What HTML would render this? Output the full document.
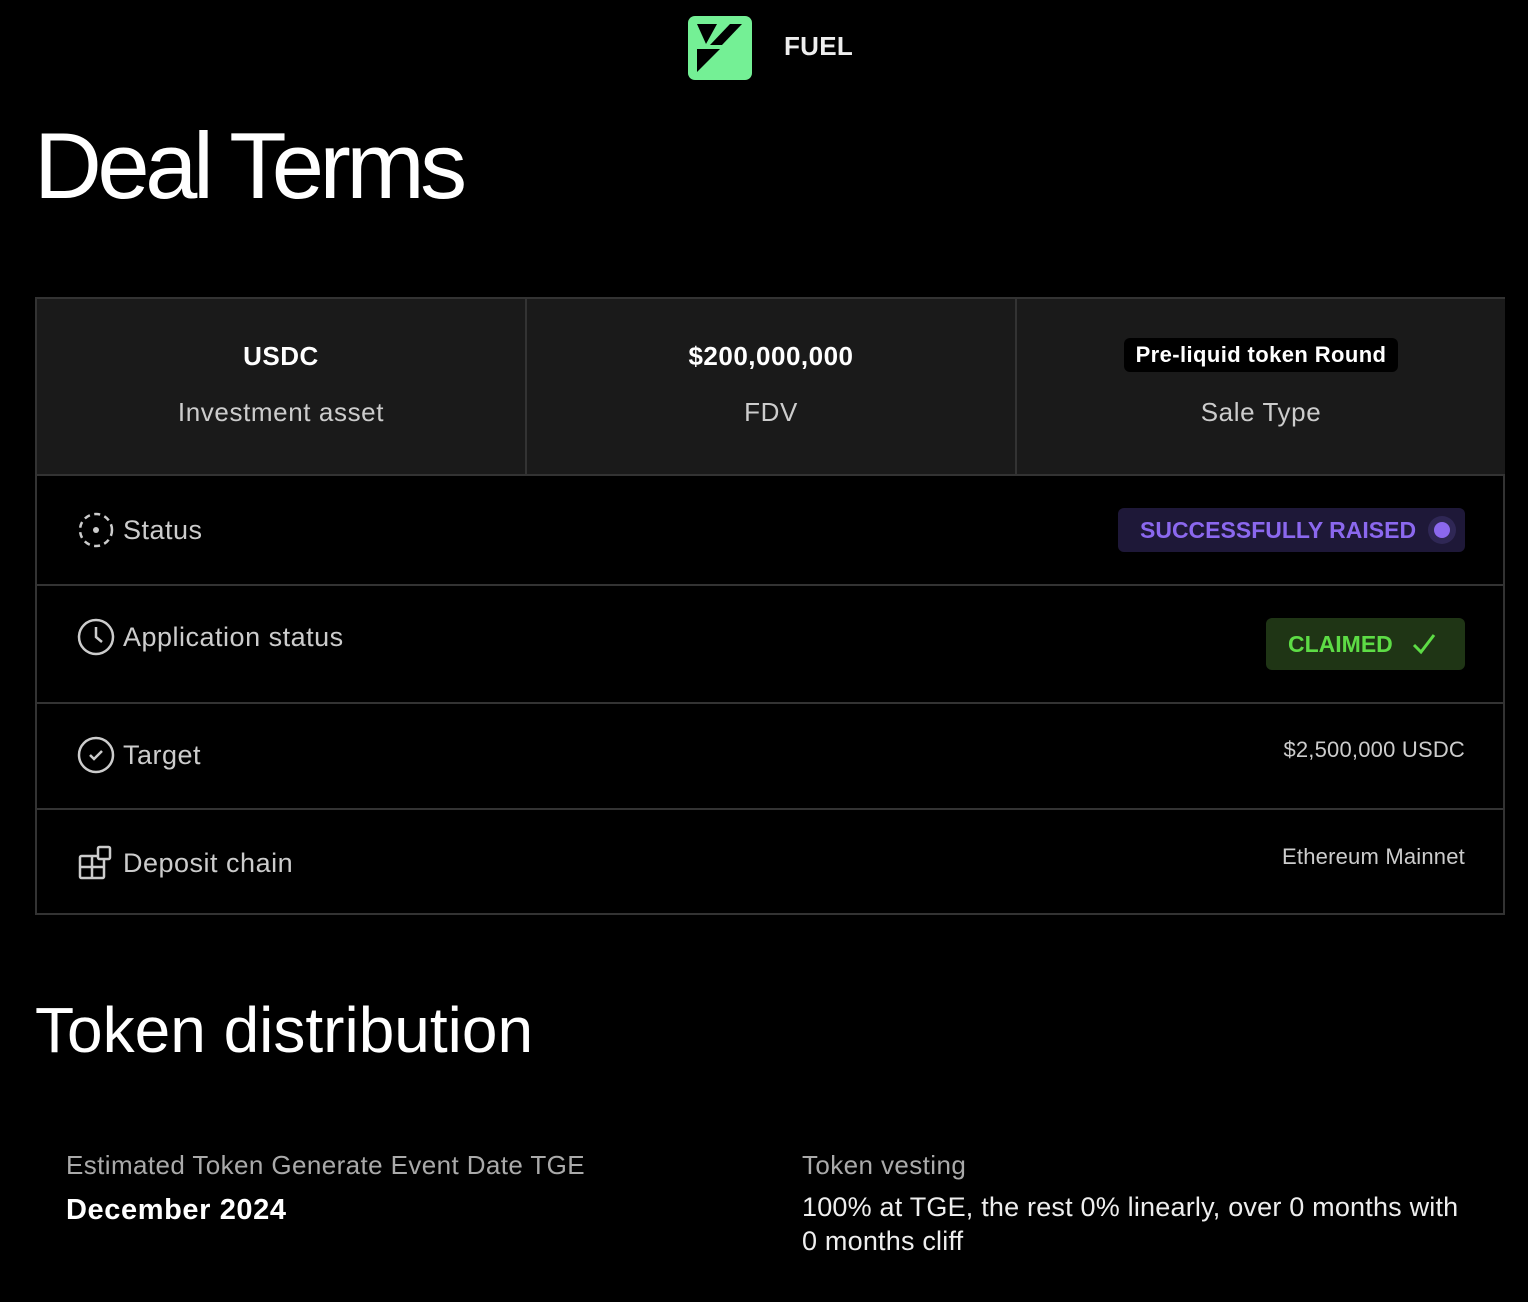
<!DOCTYPE html>
<html><head><meta charset="utf-8"><style>
*{margin:0;padding:0;box-sizing:border-box}
body{width:1528px;height:1302px;background:#000;color:#fff;font-family:"Liberation Sans",sans-serif;position:relative;overflow:hidden}
.abs{position:absolute}
.logo{left:688px;top:16px;width:64px;height:64px;background:#74f095;border-radius:7px}
.fuel{left:784px;top:31px;font-size:26px;font-weight:bold;color:#eee;letter-spacing:0.3px}
h1{position:absolute;left:34px;top:112px;font-size:94px;font-weight:normal;letter-spacing:-4.5px}
.tbl{left:35px;top:297px;width:1470px;height:618px;border:2px solid #333}
.hdr{position:absolute;left:0;top:0;width:1468px;height:177px;background:#1a1a1a;border-bottom:2px solid #333;display:flex}
.col{flex:1;text-align:center;border-right:2px solid #333;position:relative}
.col:last-child{border-right:none}
.v{position:absolute;left:0;right:0;top:42px;font-size:26px;font-weight:bold;letter-spacing:0.5px}
.l{position:absolute;left:0;right:0;top:98px;font-size:26px;color:#ccc;letter-spacing:0.6px}
.pill{display:inline-block;background:#000;border-radius:6px;padding:4px 12px;font-size:22px;letter-spacing:0.4px}
.row{position:absolute;left:0;width:1468px;border-bottom:2px solid #333}
.lab{position:absolute;left:40px;font-size:27px;color:#ccc;display:flex;align-items:center;gap:8px;letter-spacing:0.5px}
.val{position:absolute;right:40px;font-size:22px;color:#ccc;letter-spacing:0.2px}
.b1{position:absolute;right:40px;top:32px;height:44px;width:347px;background:#1e1838;border-radius:6px;color:#8b68ee;font-size:23px;font-weight:bold;display:flex;align-items:center;padding-left:22px}
.b2{position:absolute;right:40px;top:32px;height:52px;width:199px;background:#1f3515;border-radius:6px;color:#5ddc45;font-size:23px;font-weight:bold;display:flex;align-items:center;padding-left:22px}
h2{position:absolute;left:35px;top:993px;font-size:64px;font-weight:normal;letter-spacing:0px}
.t{font-size:26px;color:#ccc;letter-spacing:0.4px}
</style></head><body>
<div class="abs logo"><svg width="64" height="64" viewBox="0 0 64 64"><polygon points="9,8 29,8 18,28" fill="#000"/><polygon points="42,8 54,8 34,29 22,29" fill="#000"/><polygon points="9,33 32,33 9,56" fill="#000"/></svg></div>
<div class="abs fuel">FUEL</div>
<h1>Deal Terms</h1>
<div class="abs tbl">
 <div class="hdr">
  <div class="col"><div class="v">USDC</div><div class="l">Investment asset</div></div>
  <div class="col"><div class="v">$200,000,000</div><div class="l">FDV</div></div>
  <div class="col"><div class="v" style="top:39px"><span class="pill">Pre-liquid token Round</span></div><div class="l">Sale Type</div></div>
 </div>
 <div class="row" style="top:177px;height:110px">
  <div class="lab" style="top:35px"><svg width="38" height="38" viewBox="0 0 38 38"><circle cx="19" cy="19" r="16" fill="none" stroke="#ccc" stroke-width="2.5" stroke-dasharray="6 4.5"/><circle cx="19" cy="19" r="3" fill="#ccc"/></svg>Status</div>
  <div class="b1">SUCCESSFULLY RAISED<span style="margin-left:12px;width:28px;height:28px;border-radius:50%;background:#2f2755;display:flex;align-items:center;justify-content:center"><span style="width:16px;height:16px;border-radius:50%;background:#8b68ee"></span></span></div>
 </div>
 <div class="row" style="top:287px;height:118px">
  <div class="lab" style="top:32px"><svg width="38" height="38" viewBox="0 0 38 38"><circle cx="19" cy="19" r="17" fill="none" stroke="#ccc" stroke-width="2.5"/><path d="M19 9V19L25 24" fill="none" stroke="#ccc" stroke-width="2.5"/></svg>Application status</div>
  <div class="b2">CLAIMED<svg style="margin-left:18px" width="26" height="26" viewBox="0 0 26 26"><path d="M3 14L10 21L23 4" fill="none" stroke="#5ddc45" stroke-width="3"/></svg></div>
 </div>
 <div class="row" style="top:405px;height:106px">
  <div class="lab" style="top:32px"><svg width="38" height="38" viewBox="0 0 38 38"><circle cx="19" cy="19" r="17" fill="none" stroke="#ccc" stroke-width="2.5"/><path d="M13 19L17 23L25 15" fill="none" stroke="#ccc" stroke-width="2.5"/></svg>Target</div>
  <div class="val" style="top:33px">$2,500,000 USDC</div>
 </div>
 <div class="row" style="top:511px;height:106px;border-bottom:none">
  <div class="lab" style="top:34px"><svg width="38" height="38" viewBox="0 0 38 38"><rect x="3" y="12" width="24" height="22" rx="1.5" fill="none" stroke="#ccc" stroke-width="2.5"/><path d="M3 23H27M15 12V34" stroke="#ccc" stroke-width="2.5"/><rect x="21" y="3" width="12" height="12" rx="1.5" fill="#000" stroke="#ccc" stroke-width="2.5"/></svg>Deposit chain</div>
  <div class="val" style="top:34px">Ethereum Mainnet</div>
 </div>
</div>
<h2>Token distribution</h2>
<div class="abs t" style="left:66px;top:1150px;color:#aaa">Estimated Token Generate Event Date TGE</div>
<div class="abs" style="left:66px;top:1194px;font-size:29px;font-weight:bold;letter-spacing:0.6px">December 2024</div>
<div class="abs t" style="left:802px;top:1150px;color:#aaa">Token vesting</div>
<div class="abs" style="left:802px;top:1190px;font-size:27px;line-height:34px;width:720px;color:#eee;letter-spacing:0.2px">100% at TGE, the rest 0% linearly, over 0 months with<br>0 months cliff</div>
</body></html>
